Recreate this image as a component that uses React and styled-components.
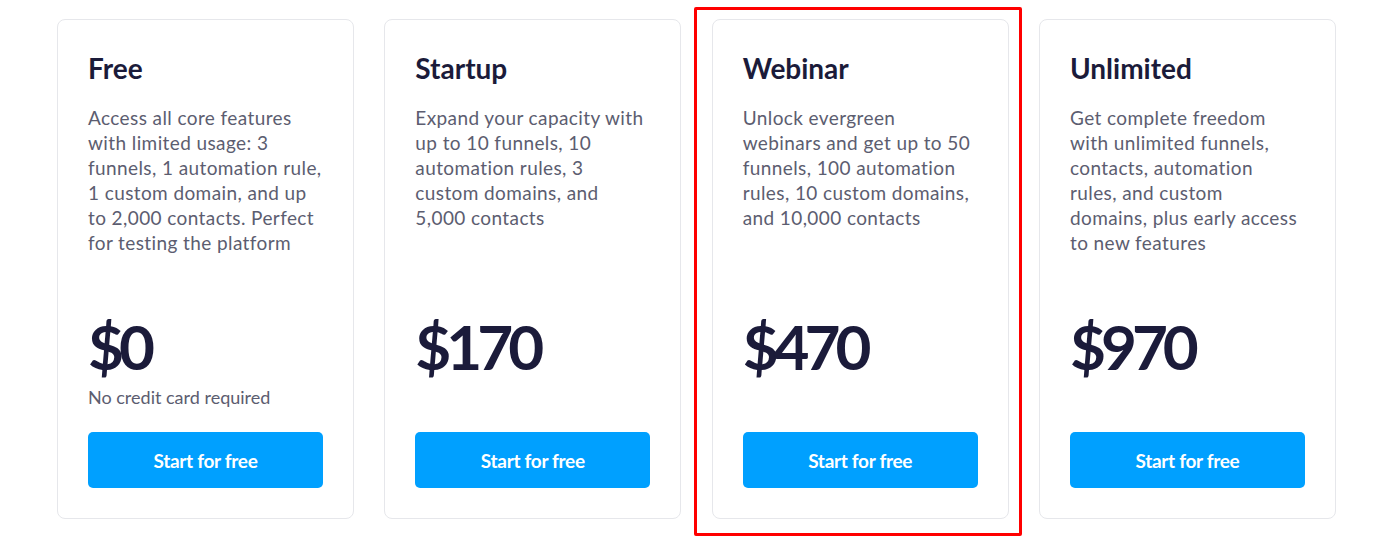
import React from 'react'
import styled, { createGlobalStyle } from 'styled-components'

const GlobalStyle = createGlobalStyle`
  * { box-sizing: border-box; }
  body {
    margin: 0;
    background: #ffffff;
    font-family: Lato, "Noto Sans", sans-serif;
  }
`

const Page = styled.div`
  width: 1392px;
  height: 546px;
  padding-top: 19px;
  overflow: hidden;
`

const Grid = styled.div`
  margin-left: 57px;
  display: grid;
  grid-template-columns: repeat(4, 297px);
  column-gap: 30.33px;
`

const Slot = styled.div`
  position: relative;
`

// red annotation frame drawn over the highlighted plan
const Highlight = styled.div`
  position: absolute;
  left: -18px;
  right: -13px;
  top: -12px;
  bottom: -17px;
  border: 3px solid #ff0000;
  border-radius: 2px;
  pointer-events: none;
`

const Card = styled.div`
  height: 500px;
  border: 1px solid #e6e7eb;
  border-radius: 8px;
  background: #fff;
  padding: 30px;
  display: flex;
  flex-direction: column;
`

const Title = styled.h3`
  margin: 0;
  font-size: 28px;
  line-height: 36px;
  font-weight: 700;
  color: #1b1b3a;
`

const Description = styled.p`
  margin: 19px 0 0;
  flex: 1;
  font-size: 19px;
  line-height: 25px;
  letter-spacing: 0.4px;
  white-space: pre;
  color: #5c5d70;
`

const PriceBlock = styled.div`
  height: 106px;
`

const Price = styled.div`
  margin-top: -2px;
  font-size: 62px;
  line-height: 70px;
  font-weight: 700;
  color: #1b1b3a;
  letter-spacing: -5px;
`

const Note = styled.div`
  margin-top: 5px;
  font-size: 18px;
  line-height: 22px;
  color: #5c5d70;
`

const Button = styled.button`
  margin-top: 13px;
  height: 56px;
  width: 100%;
  border: none;
  border-radius: 5px;
  background: #00a0ff;
  color: #fff;
  font-family: inherit;
  font-size: 19px;
  font-weight: 700;
  letter-spacing: -0.3px;
  cursor: pointer;
`

const plans = [
  {
    name: 'Free',
    text: [
      'Access all core features',
      'with limited usage: 3',
      'funnels, 1 automation rule,',
      '1 custom domain, and up',
      'to 2,000 contacts. Perfect',
      'for testing the platform',
    ],
    price: '$0',
    note: 'No credit card required',
  },
  {
    name: 'Startup',
    text: [
      'Expand your capacity with',
      'up to 10 funnels, 10',
      'automation rules, 3',
      'custom domains, and',
      '5,000 contacts',
    ],
    price: '$170',
  },
  {
    name: 'Webinar',
    text: [
      'Unlock evergreen',
      'webinars and get up to 50',
      'funnels, 100 automation',
      'rules, 10 custom domains,',
      'and 10,000 contacts',
    ],
    price: '$470',
    highlighted: true,
  },
  {
    name: 'Unlimited',
    text: [
      'Get complete freedom',
      'with unlimited funnels,',
      'contacts, automation',
      'rules, and custom',
      'domains, plus early access',
      'to new features',
    ],
    price: '$970',
  },
]

const App = () => {
  return (
    <Page>
      <GlobalStyle />
      <Grid>
        {plans.map(plan => (
          <Slot key={plan.name}>
            <Card>
              <Title>{plan.name}</Title>
              <Description>{plan.text.join('\n')}</Description>
              <PriceBlock>
                <Price>{plan.price}</Price>
                {plan.note && <Note>{plan.note}</Note>}
              </PriceBlock>
              <Button>Start for free</Button>
            </Card>
            {plan.highlighted && <Highlight />}
          </Slot>
        ))}
      </Grid>
    </Page>
  )
}

export default App
